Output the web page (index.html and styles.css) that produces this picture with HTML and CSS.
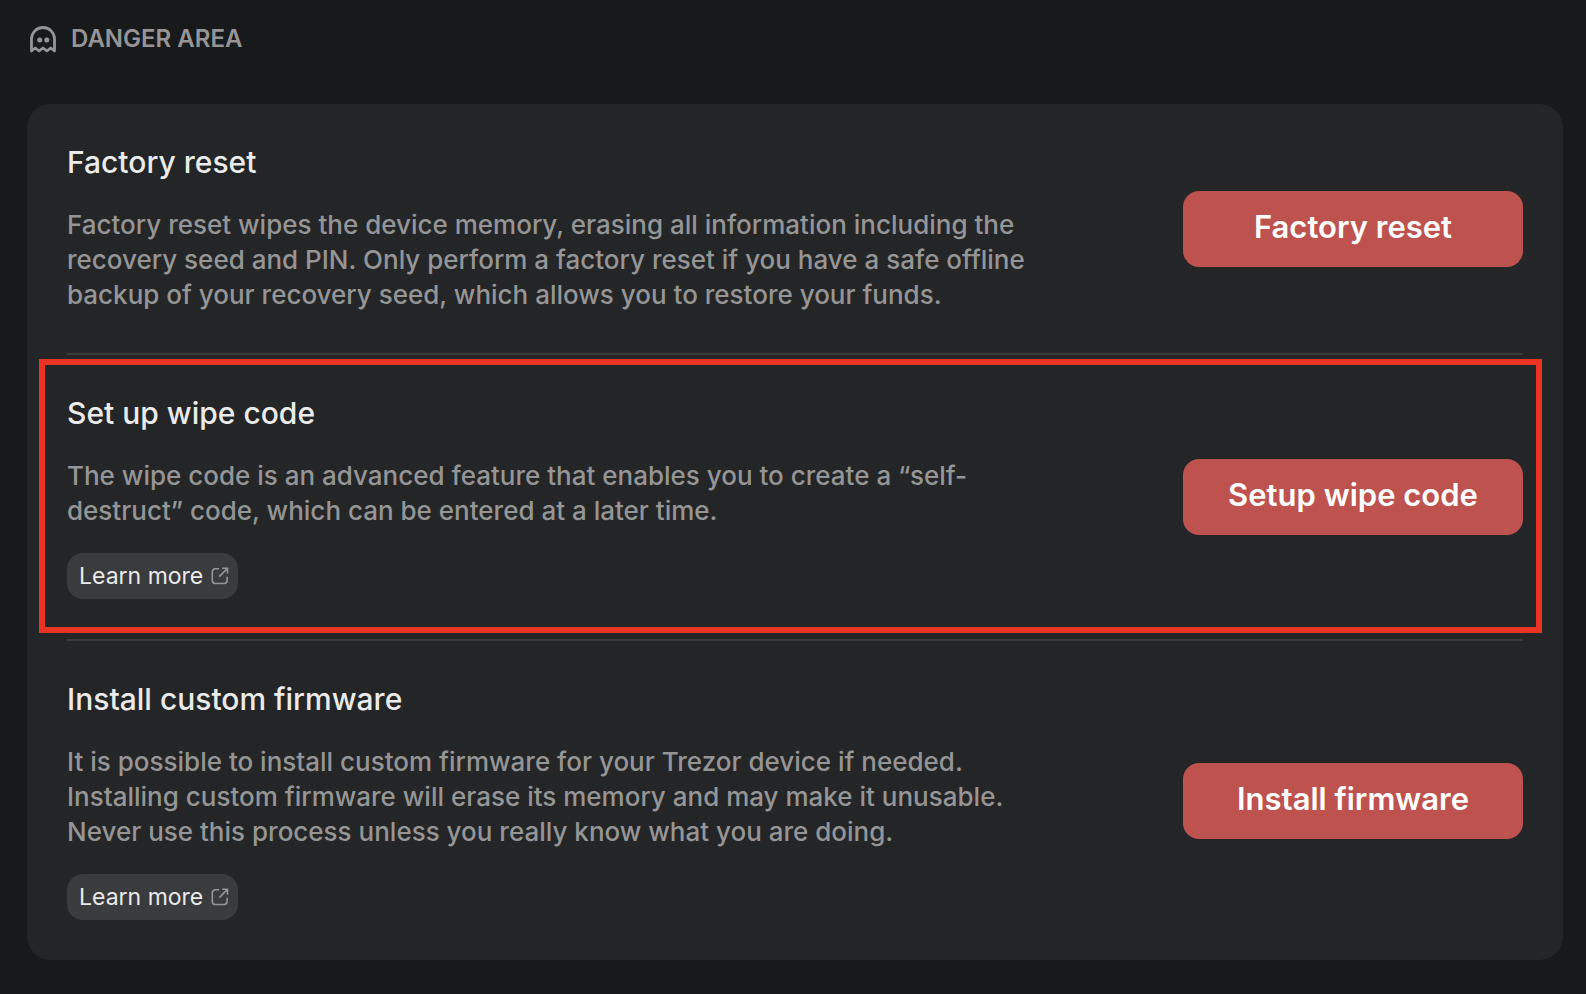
FILE: index.html
```
<!DOCTYPE html>
<html lang="en">
<head>
<meta charset="utf-8">
<title>Danger area</title>
<link rel="stylesheet" href="styles.css">
</head>
<body>
<main class="page">
  <header class="section-header">
    <svg class="ghost-icon" viewBox="0 0 28 28" aria-hidden="true">
      <path d="M2.5 26V14a11.5 11.5 0 0 1 23 0v12l-3.8-3-3.8 3-3.9-3-3.9 3-3.8-3z" fill="none" stroke="currentColor" stroke-width="2.8" stroke-linejoin="round"/>
      <circle cx="10.7" cy="15" r="2.5" fill="currentColor"/>
      <circle cx="17.8" cy="15" r="2.5" fill="currentColor"/>
    </svg>
    <h1 class="section-title">DANGER AREA</h1>
  </header>
  <div class="card">
    <section class="row">
      <div class="info">
        <h2 class="title">Factory reset</h2>
        <p class="description">Factory reset wipes the device memory, erasing all information including the<br>recovery seed and PIN. Only perform a factory reset if you have a safe offline<br>backup of your recovery seed, which allows you to restore your funds.</p>
      </div>
      <button class="action" type="button">Factory reset</button>
    </section>
    <section class="row row-highlighted">
      <div class="info">
        <h2 class="title">Set up wipe code</h2>
        <p class="description">The wipe code is an advanced feature that enables you to create a “self-<br>destruct” code, which can be entered at a later time.</p>
        <a class="learn-more" href="#wipe-code">Learn more
          <svg class="external-icon" viewBox="0 0 18 18" aria-hidden="true"><path d="M8 1.8H4.2a2.9 2.9 0 0 0-2.9 2.9v8.9a2.9 2.9 0 0 0 2.9 2.9h9a2.9 2.9 0 0 0 2.9-2.9V9.8M11.2 1.3h5.3v5.3M16.2 1.6 8.2 9.6" fill="none" stroke="currentColor" stroke-width="1.6"/></svg>
        </a>
      </div>
      <button class="action" type="button">Setup wipe code</button>
    </section>
    <section class="row">
      <div class="info">
        <h2 class="title">Install custom firmware</h2>
        <p class="description">It is possible to install custom firmware for your Trezor device if needed.<br>Installing custom firmware will erase its memory and may make it unusable.<br>Never use this process unless you really know what you are doing.</p>
        <a class="learn-more" href="#firmware">Learn more
          <svg class="external-icon" viewBox="0 0 18 18" aria-hidden="true"><path d="M8 1.8H4.2a2.9 2.9 0 0 0-2.9 2.9v8.9a2.9 2.9 0 0 0 2.9 2.9h9a2.9 2.9 0 0 0 2.9-2.9V9.8M11.2 1.3h5.3v5.3M16.2 1.6 8.2 9.6" fill="none" stroke="currentColor" stroke-width="1.6"/></svg>
        </a>
      </div>
      <button class="action" type="button">Install firmware</button>
    </section>
  </div>
</main>
</body>
</html>
```
FILE: styles.css
```
* { box-sizing: border-box; }

body {
  margin: 0;
  background: #18191b;
  color: #ebebeb;
  font-family: Inter, "Liberation Sans", sans-serif;
}

.page { padding: 23px 23px 24px 27px; }

.section-header {
  display: flex;
  align-items: center;
  gap: 14px;
  padding-left: 2px;
  margin-bottom: 49px;
  color: #959596;
}

.ghost-icon { width: 28px; height: 28px; }

.section-title {
  margin: 0;
  font-size: 24px;
  font-weight: 600;
  line-height: 32px;
}

.card {
  padding: 0 40px;
  border-radius: 24px;
  background: #242527;
}

.row {
  position: relative;
  display: flex;
  align-items: center;
  justify-content: space-between;
  gap: 40px;
  padding: 40px 0;
}

.row + .row { border-top: 2px solid #3a3b3d; }

.row-highlighted::after {
  content: "";
  position: absolute;
  inset: 4px -19px 6px -28px;
  border: 6px solid #eb3323;
  pointer-events: none;
}

.info {
  display: flex;
  flex-direction: column;
  align-items: flex-start;
}

.title {
  margin: 0 0 27px;
  font-size: 30px;
  font-weight: 500;
  line-height: 36px;
}

.description {
  margin: 0 0 1px;
  color: #959596;
  font-size: 26px;
  font-weight: 500;
  line-height: 35px;
}

.learn-more {
  display: flex;
  align-items: center;
  gap: 8px;
  height: 46px;
  margin-top: 24px;
  padding: 0 9px 0 12px;
  border-radius: 16px;
  background: #3a3b3d;
  color: #ebebeb;
  font-size: 23px;
  line-height: 32px;
  text-decoration: none;
}

.external-icon {
  width: 18px;
  height: 18px;
  color: #959596;
}

.action {
  flex: none;
  min-width: 340px;
  height: 76px;
  padding: 0 40px 4px;
  border: 0;
  border-radius: 16px;
  background: #be524e;
  color: #fff;
  font: 600 31px/36px Inter, "Liberation Sans", sans-serif;
}
```
